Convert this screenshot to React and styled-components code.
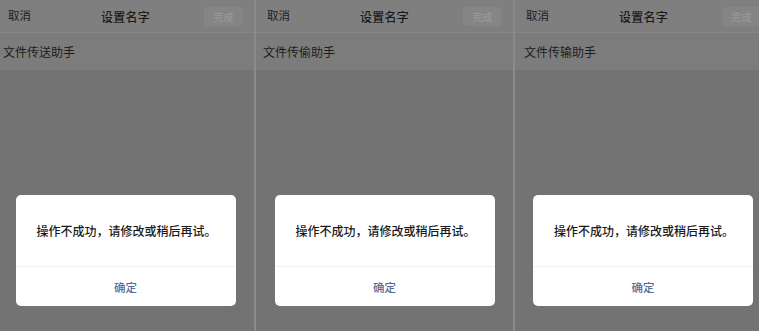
import React from 'react'
import styled, { createGlobalStyle } from 'styled-components'

const Global = createGlobalStyle`
  html, body {
    margin: 0;
    padding: 0;
    background: #888;
  }
  body {
    font-family: "Noto Sans CJK SC", "Noto Sans", sans-serif;
  }
`

const Wrap = styled.div`
  display: flex;
  gap: 1px;
  width: 759px;
  height: 331px;
  overflow: hidden;
  background: #8a8a8a;
`
const Panel = styled.div`
  width: ${p => p.width}px;
  flex: none;
  height: 100%;
  overflow: hidden;
`
const Screen = styled.div`
  width: 257px;
  height: 100%;
  margin-left: ${p => -p.shift}px;
  display: flex;
  flex-direction: column;
  background: #737373;
`
const Header = styled.div`
  height: 33px;
  flex: none;
  display: grid;
  grid-template-columns: 1fr auto 1fr;
  align-items: center;
  padding: 0 11px;
  box-sizing: border-box;
  background: #7f7f7f;
  border-bottom: 1px solid #878787;
`
const Cancel = styled.span`
  font-size: 11.5px;
  color: #1c1c1c;
  line-height: 1;
`
const Title = styled.span`
  font-size: 12px;
  font-weight: 500;
  color: #1a1a1a;
  letter-spacing: 0.3px;
`
const Done = styled.span`
  justify-self: end;
  width: 39px;
  height: 19px;
  display: flex;
  align-items: center;
  justify-content: center;
  border-radius: 3px;
  background: #858585;
  color: #9c9c9c;
  font-size: 10px;
`
const Row = styled.div`
  height: 37px;
  flex: none;
  display: flex;
  align-items: center;
  padding-left: ${p => p.indent}px;
  background: #7c7c7c;
  font-size: 12px;
  color: #1c1c1c;
`
const Body = styled.div`
  flex: 1;
  display: flex;
  flex-direction: column;
  align-items: center;
  padding-top: 125px;
`
const Dialog = styled.div`
  width: 220px;
  margin-left: ${p => p.nudge}px;
  background: #fff;
  border-radius: 5px;
  overflow: hidden;
`
const Message = styled.div`
  height: 71px;
  display: flex;
  align-items: center;
  justify-content: center;
  padding-left: 2px;
  font-size: 12px;
  font-weight: 500;
  color: #1a1a1a;
  border-bottom: 1px solid #f1f1f1;
`
const Confirm = styled.div`
  height: 39px;
  display: flex;
  align-items: center;
  justify-content: center;
  font-size: 11.5px;
  font-weight: 500;
  color: #5a6d98;
`

const screens = [
  { width: 255, shift: 3, name: '文件传送助手', indent: 6, nudge: 0 },
  { width: 258, shift: 0, name: '文件传偷助手', indent: 7, nudge: 0 },
  { width: 244, shift: 0, name: '文件传输助手', indent: 9, nudge: -1 },
]

const App = () => (
  <>
    <Global />
    <Wrap>
      {screens.map(({ width, shift, name, indent, nudge }, i) => (
        <Panel key={i} width={width}>
          <Screen shift={shift}>
            <Header>
              <Cancel>取消</Cancel>
              <Title>设置名字</Title>
              <Done>完成</Done>
            </Header>
            <Row indent={indent}>{name}</Row>
            <Body>
              <Dialog nudge={nudge}>
                <Message>操作不成功，请修改或稍后再试。</Message>
                <Confirm>确定</Confirm>
              </Dialog>
            </Body>
          </Screen>
        </Panel>
      ))}
    </Wrap>
  </>
)

export default App
